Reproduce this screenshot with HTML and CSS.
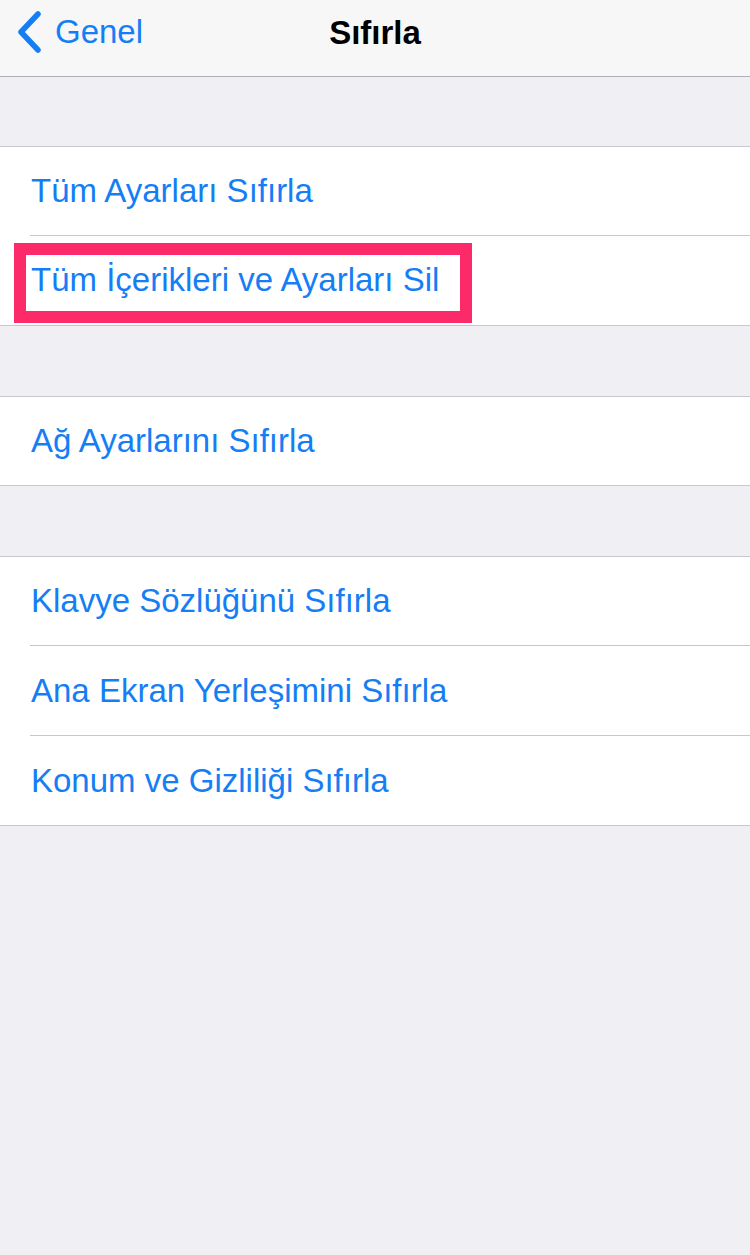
FILE: index.html
```html
<!DOCTYPE html>
<html lang="tr">
<head>
  <meta charset="UTF-8">
  <meta name="viewport" content="width=device-width, initial-scale=1.0">
  <title>Sıfırla</title>
  <link rel="stylesheet" href="styles.css">
</head>
<body>
  <div class="navbar">
    <a class="back" href="#">
      <svg class="chevron" width="28" height="42" viewBox="0 0 28 42">
        <path d="M23 3 L6 21 L23 39" fill="none" stroke="currentColor" stroke-width="5.5" stroke-linecap="round" stroke-linejoin="round"/>
      </svg>
      <span>Genel</span>
    </a>
    <div class="title">Sıfırla</div>
  </div>

  <div class="group">
    <div class="row">Tüm Ayarları Sıfırla</div>
    <div class="row"><span class="highlight">Tüm İçerikleri ve Ayarları Sil</span></div>
  </div>

  <div class="group">
    <div class="row">Ağ Ayarlarını Sıfırla</div>
  </div>

  <div class="group">
    <div class="row">Klavye Sözlüğünü Sıfırla</div>
    <div class="row">Ana Ekran Yerleşimini Sıfırla</div>
    <div class="row">Konum ve Gizliliği Sıfırla</div>
  </div>
</body>
</html>
```

FILE: styles.css
```css
body {
  margin: 0;
  padding: 0;
  min-height: 100vh;
  background-color: #efeff4;
  font-family: "Liberation Sans", Arial, sans-serif;
}

.navbar {
  position: relative;
  height: 76px;
  background-color: #f7f7f8;
  border-bottom: 1px solid #b1b1b6;
  display: flex;
  align-items: center;
  justify-content: center;
}

.back {
  position: absolute;
  left: 15px;
  top: 11px;
  display: flex;
  align-items: center;
  gap: 12px;
  color: #157ef5;
  text-decoration: none;
  font-size: 33px;
}

.chevron {
  display: block;
}

.title {
  font-size: 33px;
  font-weight: bold;
  color: #000;
  margin-top: -10px;
}

.group {
  margin-top: 69px;
  background-color: #fff;
  border-top: 1px solid #c8c7cc;
  border-bottom: 1px solid #c8c7cc;
}

.group + .group {
  margin-top: 70px;
}

.row {
  position: relative;
  height: 88px;
  display: flex;
  align-items: center;
  padding-left: 31px;
  font-size: 33px;
  color: #157ef5;
}

/* rows after the first get an inset separator */
.row + .row {
  height: 89px;
  border-top: 1px solid transparent;
}

.row + .row::before {
  content: "";
  position: absolute;
  top: -1px;
  left: 30px;
  right: 0;
  border-top: 1px solid #c8c7cc;
}

.highlight {
  margin-left: -17px;
  margin-top: 4px;
  padding: 6px 21px 12px 5px;
  border: 12px solid #fd2a6a;
  line-height: 38px;
}
```
